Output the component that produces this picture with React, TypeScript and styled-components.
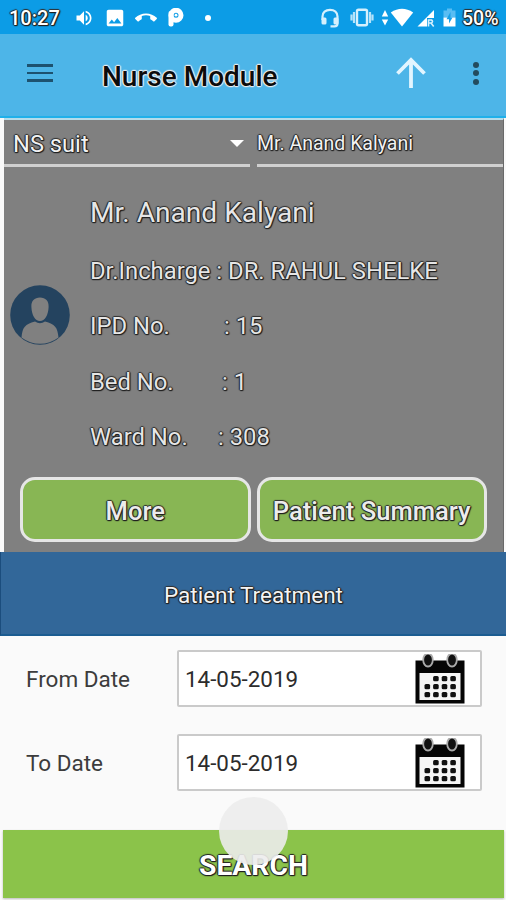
import styled, { createGlobalStyle } from "styled-components";
import { MdCallEnd, MdImage, MdVolumeUp } from "react-icons/md";

export default function App(){
    return <Screen>
        <GlobalStyle />
        <StatusBar>
            <Clock>10:27</Clock>
            <StatusIcon $w={20} $ml={14}><MdVolumeUp size={22} /></StatusIcon>
            <StatusIcon $w={22} $ml={10}><MdImage size={22} /></StatusIcon>
            <StatusIcon $w={22} $ml={9}><MdCallEnd size={24} /></StatusIcon>
            <StatusIcon $w={16} $ml={11}><ParkingLogo /></StatusIcon>
            <Dot />
            <Spacer />
            <StatusIcon $w={20}><HeadsetIcon /></StatusIcon>
            <StatusIcon $w={24} $ml={10}><VibrateIcon /></StatusIcon>
            <StatusIcon $w={8} $ml={7}><DataArrows /></StatusIcon>
            <StatusIcon $w={24} $ml={1}><WifiIcon /></StatusIcon>
            <StatusIcon $w={18} $ml={3}><SignalIcon /></StatusIcon>
            <StatusIcon $w={13} $ml={8}><BatteryIcon /></StatusIcon>
            <Percent>50%</Percent>
        </StatusBar>

        <AppBar>
            <MenuButton aria-label="menu"><i /><i /><i /></MenuButton>
            <Title>Nurse Module</Title>
            <UpButton aria-label="up"><ArrowUp /></UpButton>
            <MoreDots aria-label="options"><i /><i /><i /></MoreDots>
        </AppBar>

        <PatientPanel>
            <SpinnerRow>
                <Spinner $size={23.7}>NS suit<Caret /></Spinner>
                <Spinner $size={19.5}>Mr. Anand Kalyani</Spinner>
            </SpinnerRow>
            <Patient>
                <AvatarBox><Avatar /></AvatarBox>
                <Details>
                    <Name>Mr. Anand Kalyani</Name>
                    <Line>Dr.Incharge : DR. RAHUL SHELKE</Line>
                    <Line><Label $w={134}>IPD No.</Label>: 15</Line>
                    <Line><Label $w={132}>Bed No.</Label>: 1</Line>
                    <Line><Label $w={128}>Ward No.</Label>: 308</Line>
                </Details>
            </Patient>
            <Actions>
                <ActionButton>More</ActionButton>
                <ActionButton>Patient Summary</ActionButton>
            </Actions>
        </PatientPanel>

        <SectionHeader>Patient Treatment</SectionHeader>

        <Form>
            <DateRow label="From Date" value="14-05-2019" />
            <DateRow label="To Date" value="14-05-2019" />
        </Form>

        <SearchButton>SEARCH<TouchDot /></SearchButton>
    </Screen>
}

function DateRow({ label, value }: { label: string; value: string }){
    return <Row>
        <RowLabel>{label}</RowLabel>
        <DateField>
            <span>{value}</span>
            <CalendarIcon />
        </DateField>
    </Row>
}

function ParkingLogo(){
    return <svg width="16" height="19" viewBox="0 0 16 19">
        <rect x="0.5" y="3" width="5" height="15.5" rx="2" fill="#fff" />
        <circle cx="8" cy="7.2" r="5" fill="none" stroke="#fff" strokeWidth="5" />
        <circle cx="8" cy="7.2" r="1.4" fill="#fff" />
    </svg>
}

function HeadsetIcon(){
    return <svg width="20" height="20" viewBox="0 0 20 20">
        <path d="M2.5 12V8.500C2.500 4.500 5.500 1.800 10 1.800S17.500 4.500 17.500 8.500V15.500Q17.500 18.300 14.500 18.300H10.500" fill="none" stroke="#d5f0fd" strokeWidth="2.2" />
        <rect x="1.500" y="9.500" width="5" height="7" rx="1.500" fill="#d5f0fd" />
        <rect x="13.500" y="9.500" width="5" height="7" rx="1.500" fill="#d5f0fd" />
    </svg>
}

function VibrateIcon(){
    return <svg width="24" height="19" viewBox="0 0 24 19">
        <rect x="7" y="1.800" width="10" height="15.400" rx="1.500" fill="none" stroke="#d5f0fd" strokeWidth="2.400" />
        <path d="M4 4V15M20 4V15M1.500 6.500V12.500M22.500 6.500V12.500" stroke="#b5e3fa" strokeWidth="2.200" />
    </svg>
}

function DataArrows(){
    return <svg width="8" height="16" viewBox="0 0 8 16" fill="#fff">
        <path d="M4 0L7.2 6.4H0.8zM4 15.5L0.8 9.5H7.2z" />
    </svg>
}

function WifiIcon(){
    return <svg width="24" height="19" viewBox="0 0 24 19">
        <path d="M0.8 4.5Q12 -3 23.2 4.5L12 18.5z" fill="#fff" />
    </svg>
}

function SignalIcon(){
    return <svg width="18" height="18" viewBox="0 0 18 18">
        <path d="M0.5 17.5L17 1V9H10V17.5z" fill="#fff" />
        <path d="M11.5 17.5V11H14.5Q16.5 12.5 14.5 14H12M14 14L16.7 17.5" fill="none" stroke="#d5f0fd" strokeWidth="1.6" />
    </svg>
}

function BatteryIcon(){
    return <svg width="13" height="19" viewBox="0 0 13 19">
        <path d="M4 0.5H9V2.5H12.5V9.5H0.5V2.5H4z" fill="#58bdf3" />
        <path d="M0.5 9.5H12.5V18.5H0.5z" fill="#fff" />
        <path d="M7.500 4L3.500 11.200H6V15.500L9.500 9.500H7.500z" fill="#16a0e8" />
    </svg>
}

function ArrowUp(){
    return <svg width="32" height="32" viewBox="0 0 32 32" fill="none" stroke="#e2f5ff" strokeWidth="3.8">
        <path d="M16 31V4M2.5 16.5L16 3L29.5 16.5" />
    </svg>
}

function Avatar(){
    return <svg width="60" height="60" viewBox="0 0 60 60">
        <circle cx="30" cy="30" r="29.8" fill="#24435f" />
        <path d="M30 12.5C35.500 12.500 39 16 38.600 22C38.300 30 35 36 30 36C25 36 21.700 30 21.400 22C21 16 24.500 12.500 30 12.500z" fill="#808080" />
        <path d="M11.500 52.500C12.500 42 15 39.500 25 36.500Q30 40 35 36.500C45 39.500 47.500 42 48.500 52.500Q40 58.800 30 58.800Q20 58.800 11.500 52.500z" fill="#808080" />
    </svg>
}

function CalendarIcon(){
    const cells = [[1, 0], [2, 0], [3, 0], [0, 1], [1, 1], [2, 1], [3, 1], [0, 2], [1, 2], [2, 2], [3, 2]];
    return <svg width="50" height="50" viewBox="0 0 50 50">
        <rect x="0.5" y="6.500" width="49" height="43" fill="#050505" />
        <rect x="4.500" y="19" width="41" height="27" fill="#f6f6f6" />
        {[13, 37].map(x => <ellipse key={x} cx={x} cy="6" rx="4.800" ry="6.500" fill="#111" stroke="#aaa" strokeWidth="1.800" />)}
        {cells.map(([x, y]) => <rect key={`${x}${y}`} x={9.5 + x * 8.6} y={22 + y * 8} width="5.600" height="5.200" rx="1.500" fill="#111" />)}
    </svg>
}

const GlobalStyle = createGlobalStyle`
  * { box-sizing: border-box; }
  body {
    margin: 0;
    background: #fafafa;
    font-family: Roboto, "Liberation Sans", sans-serif;
  }
  button {
    font-family: inherit;
    border: none;
    padding: 0;
    background: none;
  }
`;

const darkOutline = `
  text-shadow: 1px 0 1px #222, -1px 0 1px #222, 0 1px 1px #222, 0 -1px 1px #333, 1px 1px 1px #222;
`;

const Screen = styled.div`
  width: 506px;
  height: 900px;
  overflow: hidden;
  display: flex;
  flex-direction: column;
`;

const StatusBar = styled.header`
  height: 34px;
  flex: none;
  display: flex;
  align-items: center;
  padding: 1px 8px 0 9px;
  background: #0c9ce6;
  color: #fff;
`;

const Clock = styled.span`
  width: 51px;
  padding-top: 1px;
  font-size: 20px;
  font-weight: 500;
  ${darkOutline}
`;

const Percent = styled.span`
  width: 36px;
  margin-left: 6px;
  padding-top: 1px;
  font-size: 19.5px;
  font-weight: 500;
  ${darkOutline}
`;

const StatusIcon = styled.span<{ $w: number; $ml?: number }>`
  width: ${p => p.$w}px;
  margin-left: ${p => p.$ml || 0}px;
  flex: none;
  display: flex;
  justify-content: center;
`;

const Dot = styled.i`
  width: 6px;
  height: 6px;
  margin-left: 21px;
  border-radius: 50%;
  background: #fff;
`;

const Spacer = styled.div`
  flex: 1;
`;

const AppBar = styled.nav`
  height: 84px;
  flex: none;
  display: flex;
  align-items: center;
  padding: 0 26px 4px 27px;
  background: #4db5e8;
  border-bottom: 2px solid #1fb0ea;
`;

const MenuButton = styled.button`
  width: 26px;
  display: flex;
  flex-direction: column;
  gap: 5px;
  i {
    height: 2.6px;
    background: #1d5270;
  }
`;

const Title = styled.h1`
  margin: 6px 0 0 49px;
  flex: 1;
  color: #0c0c0c;
  font-size: 28px;
  font-weight: 500;
  text-shadow: 1px 0 1px #eee, -1px 0 1px #eee, 0 1px 1px #eee, 0 -1px 1px #eee, 0 0 2px #fff, 0 0 2px #fff;
`;

const UpButton = styled.button`
  height: 32px;
  margin-right: 46px;
`;

const MoreDots = styled.button`
  display: flex;
  flex-direction: column;
  gap: 2.5px;
  width: 7px;
  i {
    width: 6px;
    height: 6px;
    border-radius: 50%;
    background: #234b5e;
  }
`;

const PatientPanel = styled.section`
  height: 434px;
  flex: none;
  display: flex;
  flex-direction: column;
  margin: 0 2px 0 4px;
  background: #808080;
  border-top: 2px solid #b5dcea;
  border-right: 1px solid #696969;
  color: #e6e6e6;
`;

const SpinnerRow = styled.div`
  display: flex;
  gap: 7px;
`;

const Spinner = styled.div<{ $size: number }>`
  width: 246px;
  height: 47px;
  display: flex;
  align-items: center;
  justify-content: space-between;
  border-bottom: 3px solid #d0d0d0;
  font-size: ${p => p.$size}px;
  padding: 2px 7px 0 0;
  color: #f2f2f2;
  ${darkOutline}
  &:first-child { padding: 4px 6px 0 9px; }
`;

const Caret = styled.i`
  border: 7px solid transparent;
  border-top: 7px solid #fff;
  border-bottom: 0;
  margin-bottom: 2px;
`;

const Patient = styled.div`
  display: flex;
  height: 310px;
  padding: 17px 0 0 6px;
`;

const AvatarBox = styled.div`
  width: 80px;
  padding-top: 101px;
`;

const Details = styled.div`
  display: flex;
  flex-direction: column;
  ${darkOutline}
`;

const Name = styled.div`
  height: 60px;
  line-height: 58px;
  font-size: 28.1px;
`;

const Line = styled.div`
  display: flex;
  height: 55.3px;
  line-height: 55px;
  font-size: 23.8px;
  white-space: pre;
`;

const Label = styled.span<{ $w: number }>`
  width: ${p => p.$w}px;
`;

const Actions = styled.div`
  display: flex;
  gap: 6px;
  padding: 0 16px;
`;

const ActionButton = styled.button`
  flex: 1;
  height: 65px;
  border: 3px solid #e6e6e6;
  border-radius: 15px;
  background: #88b654;
  color: #ececec;
  font-size: 25.6px;
  font-weight: 500;
  padding-top: 2px;
  ${darkOutline}
`;

const SectionHeader = styled.h2`
  height: 84px;
  flex: none;
  margin: 0;
  display: flex;
  align-items: center;
  justify-content: center;
  background: #326799;
  border-bottom: 2px solid #1b5c91;
  border-left: 1px solid #1b4d7d;
  color: #f4f4f4;
  font-size: 22.5px;
  font-weight: 400;
  padding-top: 3px;
  ${darkOutline}
`;

const Form = styled.form`
  height: 194px;
  flex: none;
  display: flex;
  flex-direction: column;
  gap: 27px;
  padding: 14px 24px 0 26px;
`;

const Row = styled.div`
  display: flex;
  align-items: center;
`;

const RowLabel = styled.label`
  width: 151px;
  color: #3c3c3c;
  font-size: 22.5px;
`;

const DateField = styled.div`
  flex: 1;
  height: 57px;
  display: flex;
  align-items: center;
  justify-content: space-between;
  padding: 0 15px 0 6px;
  background: #fff;
  border: 2px solid #cacaca;
  border-radius: 2px;
  color: #2c2c2c;
  font-size: 22.4px;
`;

const SearchButton = styled.button`
  position: relative;
  height: 68px;
  flex: none;
  margin: 0 2px 0 3px;
  background: #8bc34a;
  box-shadow: 0 1px 2px #bbb;
  color: #fff;
  font-size: 28.3px;
  font-weight: 700;
  padding-top: 3px;
  text-shadow: 1px 0 1px #222, -1px 0 1px #222, 0 1px 1px #222, 0 -1px 1px #222, 1px 1px 1px #222;
`;

// ripple left by the finger, drawn over the button
const TouchDot = styled.span`
  position: absolute;
  top: -33px;
  left: 216px;
  width: 69px;
  height: 68px;
  border-radius: 50%;
  background: rgba(236, 236, 236, 0.9);
`;
